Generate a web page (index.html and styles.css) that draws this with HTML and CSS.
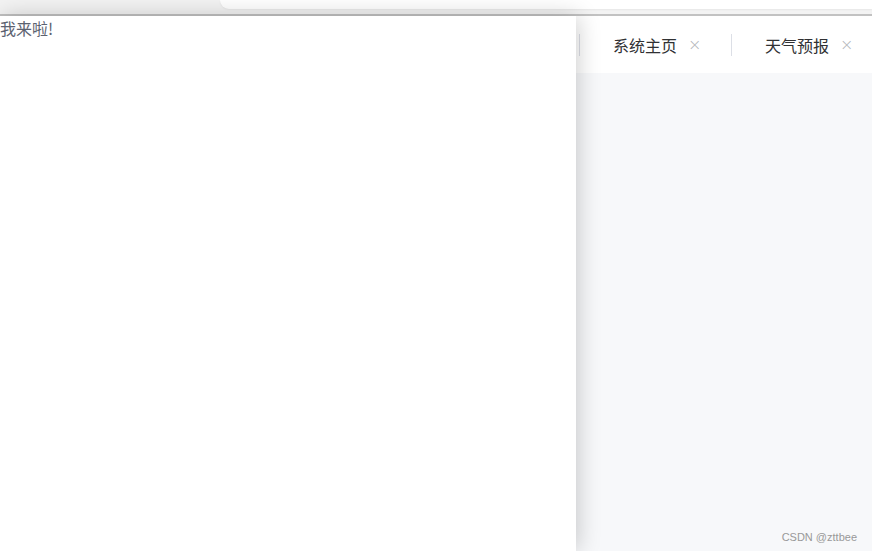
FILE: index.html
```html
<!DOCTYPE html>
<html lang="zh">
<head>
<meta charset="utf-8">
<link rel="stylesheet" href="styles.css">
</head>
<body>
<div class="chrome">
  <div class="chrome-gap"></div>
  <div class="chrome-tab"></div>
</div>
<div class="main">
  <div class="panel">我来啦!</div>
  <div class="side">
    <div class="tabs">
      <div class="tab"><span class="tab-label">系统主页</span><span class="tab-close">×</span></div>
      <div class="tab"><span class="tab-label">天气预报</span><span class="tab-close">×</span></div>
    </div>
    <div class="content">
      <div class="watermark">CSDN @zttbee</div>
    </div>
  </div>
</div>
</body>
</html>
```
FILE: styles.css
```css
html, body {
  margin: 0;
  padding: 0;
  height: 100%;
  overflow: hidden;
}
body {
  font-family: "Noto Sans CJK SC", "Noto Sans", sans-serif;
  display: flex;
  flex-direction: column;
  background: #fff;
}
.chrome {
  height: 14px;
  background: #f3f3f3;
  border-bottom: 2px solid #c2c2c2;
  display: flex;
  align-items: flex-start;
}
.chrome-gap {
  width: 220px;
}
.chrome-tab {
  flex: 1;
  height: 9px;
  background: #fff;
  border-bottom-left-radius: 14px;
  box-shadow: 0 1px 2px rgba(0,0,0,0.05);
}
.main {
  flex: 1;
  display: flex;
  min-height: 0;
}
.panel {
  width: 576px;
  flex-shrink: 0;
  background: #fff;
  color: #5c6270;
  font-size: 16px;
  line-height: 24px;
  position: relative;
  z-index: 2;
  box-shadow: 2px 0 22px rgba(0,0,0,0.2);
}
.side {
  flex: 1;
  min-width: 0;
  overflow: hidden;
  display: flex;
  flex-direction: column;
  background: #f7f8fa;
}
.tabs {
  height: 57px;
  background: #fff;
  display: flex;
  align-items: center;
  padding-left: 3px;
}
.tab {
  width: 152px;
  flex-shrink: 0;
  height: 22px;
  border-left: 1px solid #dcdfe6;
  display: flex;
  align-items: center;
  padding-left: 33px;
  box-sizing: border-box;
}
.tab-label {
  font-size: 16px;
  color: #303133;
  line-height: 22px;
}
.tab-close {
  margin-left: 11px;
  font-size: 16px;
  color: #b4b6bb;
  font-family: "DejaVu Sans", sans-serif;
  font-weight: 300;
}
.content {
  flex: 1;
  display: flex;
  align-items: flex-end;
  justify-content: flex-end;
}
.watermark {
  font-family: "Liberation Sans", Arial, sans-serif;
  font-size: 11px;
  color: #999;
  padding: 0 15px 8px 0;
  white-space: nowrap;
}
```
